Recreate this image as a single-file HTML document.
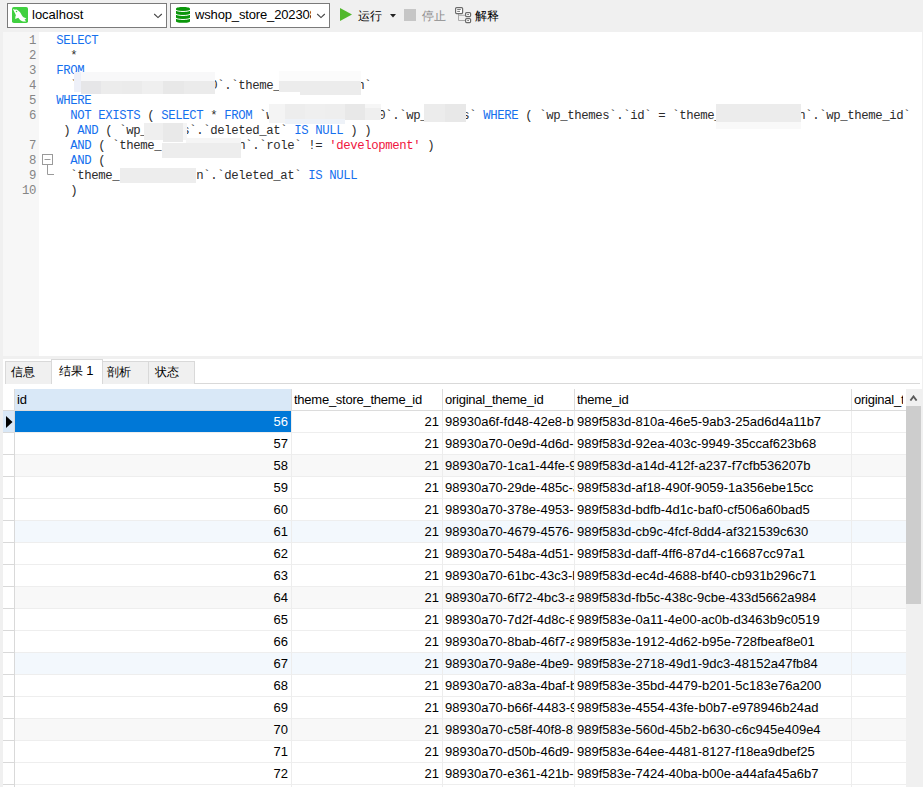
<!DOCTYPE html>
<html><head><meta charset="utf-8">
<style>
*{margin:0;padding:0;box-sizing:border-box}
html,body{width:923px;height:787px;overflow:hidden;background:#f0f0f0;font-family:"Liberation Sans",sans-serif;position:relative}
.a{position:absolute}
.combo{position:absolute;top:3px;height:25px;background:#fff;border:1px solid #7a7a7a}
.ttext{position:absolute;font-size:13px;color:#000;white-space:nowrap;line-height:16px}
#editor{position:absolute;left:3px;top:32px;width:919px;height:324px;background:#fff;overflow:hidden}
#gutter{position:absolute;left:0;top:0;width:36px;height:324px;background:#f7f7f7}
.ln{position:absolute;left:0;width:33px;text-align:right;font-family:"Liberation Mono",monospace;font-size:12.3px;letter-spacing:-0.38px;line-height:15px;color:#858585}
.cl{position:absolute;white-space:pre;font-family:"Liberation Mono",monospace;font-size:12.3px;letter-spacing:-0.38px;line-height:15px;color:#2b2b2b}
.k{color:#1670ee}
.s{color:#f0143c}
.blur{position:absolute}
#res{position:absolute;left:3px;top:359px;width:919px;height:428px;background:#fff;overflow:hidden}
.tab{position:absolute;background:#f0f0f0;border:1px solid #d9d9d9;border-bottom:none;font-size:13px;white-space:nowrap}
.cj{font-size:12px;font-weight:500}
.cell{position:absolute;font-size:13px;white-space:nowrap;overflow:hidden;line-height:22px;color:#000}
</style></head><body>

<div class="combo" style="left:7px;width:160px"></div>
<div class="combo" style="left:170px;width:160px"></div>
<svg class="a" style="left:12px;top:7px" width="16" height="16" viewBox="0 0 16 16"><rect x="0" y="0" width="16" height="16" rx="1.8" fill="#40d040"/><path d="M0.9 2.1 L3.2 2.7 C3.8 2.5 4.6 2.6 5.4 3 C7.4 4 8.6 5.8 9.8 8.2 C10.5 9.6 12 10.8 14.4 11.3 L12.5 12.8 L14.2 14.3 C12.3 14.9 10 14.5 8.4 13.2 C7.5 12.5 6.9 11.6 6.3 10.8 L3.2 12 L3.4 9.6 C3.9 9.1 4 8.5 3.7 7.8 C3.1 6.3 2.1 4.5 0.9 2.1 Z" fill="#fff"/><circle cx="4.5" cy="4.6" r="0.75" fill="#40d040"/></svg>
<div class="ttext" style="left:32px;top:7px">localhost</div>
<svg class="a" style="left:153px;top:13px" width="10" height="7" viewBox="0 0 10 7"><path d="M1.2 1 L5 4.6 L8.8 1" fill="none" stroke="#444" stroke-width="1.1"/></svg>
<svg class="a" style="left:316px;top:13px" width="10" height="7" viewBox="0 0 10 7"><path d="M1.2 1 L5 4.6 L8.8 1" fill="none" stroke="#444" stroke-width="1.1"/></svg>
<svg class="a" style="left:176px;top:7px" width="14" height="16" viewBox="0 0 14 16">
<path d="M0 1.6 C0 -0.5 14 -0.5 14 1.6 V14.2 C14 16.4 0 16.4 0 14.2 Z" fill="#0a960a"/>
<path d="M0 3.2 C2.2 4.9 11.8 4.9 14 3.2" fill="none" stroke="#fff" stroke-width="1"/>
<path d="M0 7.2 C2.2 8.9 11.8 8.9 14 7.2" fill="none" stroke="#fff" stroke-width="1"/>
<path d="M0 11.2 C2.2 12.9 11.8 12.9 14 11.2" fill="none" stroke="#fff" stroke-width="1"/>
</svg>
<div class="ttext" style="left:195px;top:7px;width:116px;overflow:hidden;letter-spacing:-0.15px">wshop_store_20230810</div>
<svg class="a" style="left:340px;top:8px" width="12" height="13" viewBox="0 0 12 13"><path d="M0 0 L12 6.5 L0 13 Z" fill="#52b82c"/></svg>
<div class="ttext cj" style="left:358px;top:8px">运行</div>
<svg class="a" style="left:390px;top:14px" width="6" height="4" viewBox="0 0 6 4"><path d="M0 0 L6 0 L3 3.5 Z" fill="#222"/></svg>
<div class="a" style="left:404px;top:9px;width:12px;height:12px;background:#c6c6c6"></div>
<div class="ttext cj" style="left:422px;top:8px;color:#8c8c8c">停止</div>
<svg class="a" style="left:454px;top:6px" width="18" height="18" viewBox="0 0 18 18">
<path d="M4.5 8 V14.5 H11 M4.5 9.3 H11" fill="none" stroke="#aaa" stroke-width="1"/>
<rect x="1.6" y="1.6" width="7" height="6" rx="1" fill="#fff" stroke="#6a6a6a" stroke-width="1.2"/>
<path d="M3.2 3.5 H6.8 M3.2 5.4 H6" stroke="#6a6a6a" stroke-width="0.9"/>
<rect x="11.6" y="6.6" width="5" height="4" rx="1" fill="#fff" stroke="#6a6a6a" stroke-width="1.2"/>
<rect x="11.6" y="12.6" width="5" height="4" rx="1" fill="#fff" stroke="#6a6a6a" stroke-width="1.2"/>
<path d="M13.2 8.6 H15 M13.2 14.6 H15" stroke="#6a6a6a" stroke-width="0.9"/>
</svg>
<div class="ttext cj" style="left:475px;top:8px">解释</div>
<div id="editor"><div id="gutter"></div>
<div class="ln" style="top:2px">1</div>
<div class="ln" style="top:17px">2</div>
<div class="ln" style="top:32px">3</div>
<div class="ln" style="top:47px">4</div>
<div class="ln" style="top:62px">5</div>
<div class="ln" style="top:77px">6</div>
<div class="ln" style="top:107px">7</div>
<div class="ln" style="top:122px">8</div>
<div class="ln" style="top:137px">9</div>
<div class="ln" style="top:152px">10</div>
<div class="cl" style="left:53.3px;top:2px"><span class="k">SELECT</span></div>
<div class="cl" style="left:53.3px;top:17px">  *</div>
<div class="cl" style="left:53.3px;top:32px"><span class="k">FROM</span></div>
<div class="cl" style="left:53.3px;top:47px">  `                   0`.`theme_           n`</div>
<div class="cl" style="left:53.3px;top:62px"><span class="k">WHERE</span></div>
<div class="cl" style="left:53.3px;top:77px">  <span class="k">NOT</span> <span class="k">EXISTS</span> ( <span class="k">SELECT</span> * <span class="k">FROM</span> `w               0`.`wp_     s` <span class="k">WHERE</span> ( `wp_themes`.`id` = `theme_           n`.`wp_theme_id`</div>
<div class="cl" style="left:53.3px;top:92px"> ) <span class="k">AND</span> ( `wp_     s`.`deleted_at` <span class="k">IS</span> <span class="k">NULL</span> ) )</div>
<div class="cl" style="left:53.3px;top:107px">  <span class="k">AND</span> ( `theme_           n`.`role` != <span class="s">'development'</span> )</div>
<div class="cl" style="left:53.3px;top:122px">  <span class="k">AND</span> (</div>
<div class="cl" style="left:53.3px;top:137px">  `theme_           n`.`deleted_at` <span class="k">IS</span> <span class="k">NULL</span></div>
<div class="cl" style="left:53.3px;top:152px">  )</div>
<svg class="a" style="left:39px;top:122px" width="14" height="22" viewBox="0 0 14 22"><rect x="0.5" y="0.5" width="10" height="10" fill="#fff" stroke="#9a9a9a"/><path d="M2.5 5.5 H8.5" stroke="#9a9a9a"/><path d="M5.5 10.5 V20.5 H12" fill="none" stroke="#9a9a9a"/></svg>
</div>
<div class="blur" style="left:74px;top:72px;width:8px;height:20px;background:#eef0f8"></div>
<div class="blur" style="left:81px;top:72px;width:134px;height:9px;background:#f8f8f9"></div>
<div class="blur" style="left:81px;top:81px;width:20px;height:13px;background:#e6e6e8"></div>
<div class="blur" style="left:101px;top:81px;width:21px;height:13px;background:#ececec"></div>
<div class="blur" style="left:122px;top:81px;width:20px;height:13px;background:#ebebeb"></div>
<div class="blur" style="left:142px;top:81px;width:21px;height:13px;background:#efefef"></div>
<div class="blur" style="left:163px;top:81px;width:21px;height:13px;background:#e8e8e8"></div>
<div class="blur" style="left:184px;top:81px;width:31px;height:13px;background:#ebebeb"></div>
<div class="blur" style="left:279px;top:71px;width:82px;height:10px;background:#fbfbfb"></div>
<div class="blur" style="left:279px;top:81px;width:21px;height:11px;background:#ececec"></div>
<div class="blur" style="left:300px;top:81px;width:61px;height:14px;background:#ececec"></div>
<div class="blur" style="left:269px;top:104px;width:16px;height:19px;background:#f4f4f4"></div>
<div class="blur" style="left:285px;top:104px;width:20px;height:15px;background:#ededed"></div>
<div class="blur" style="left:305px;top:104px;width:20px;height:15px;background:#efefef"></div>
<div class="blur" style="left:325px;top:104px;width:20px;height:15px;background:#eeeeee"></div>
<div class="blur" style="left:345px;top:104px;width:20px;height:16px;background:#e8e8e8"></div>
<div class="blur" style="left:365px;top:104px;width:16px;height:4px;background:#f6f6f6"></div>
<div class="blur" style="left:365px;top:108px;width:16px;height:12px;background:#efefef"></div>
<div class="blur" style="left:285px;top:119px;width:60px;height:5px;background:#eef2f8"></div>
<div class="blur" style="left:424px;top:104px;width:21px;height:18px;background:#ececec"></div>
<div class="blur" style="left:445px;top:104px;width:21px;height:18px;background:#e8e8e8"></div>
<div class="blur" style="left:716px;top:104px;width:85px;height:18px;background:#ececec"></div>
<div class="blur" style="left:716px;top:122px;width:85px;height:7px;background:#f9f9f9"></div>
<div class="blur" style="left:144px;top:123px;width:19px;height:17px;background:#efefef"></div>
<div class="blur" style="left:163px;top:123px;width:20px;height:19px;background:#e9e9e9"></div>
<div class="blur" style="left:183px;top:123px;width:4px;height:17px;background:#f5f5f5"></div>
<div class="blur" style="left:186px;top:138px;width:55px;height:5px;background:#f5f5f5"></div>
<div class="blur" style="left:162px;top:143px;width:79px;height:15px;background:#ededed"></div>
<div class="blur" style="left:120px;top:168px;width:76px;height:15px;background:#ededed"></div>
<div id="res">
<div class="a" style="left:2px;top:24px;width:915px;height:1px;background:#d9d9d9"></div>
<div class="tab" style="left:2px;top:2px;width:47px;height:23px;background:#f0f0f0"></div>
<div class="tab" style="left:48px;top:0px;width:52px;height:25px;background:#fff"></div>
<div class="tab" style="left:99px;top:2px;width:47px;height:23px;background:#f0f0f0"></div>
<div class="tab" style="left:145px;top:2px;width:47px;height:23px;background:#f0f0f0"></div>
<div class="ttext" style="left:8.4px;top:5px"><span class="cj">信息</span></div>
<div class="ttext" style="left:55.6px;top:4px"><span class="cj">结果</span> 1</div>
<div class="ttext" style="left:103.5px;top:5px"><span class="cj">剖析</span></div>
<div class="ttext" style="left:151.5px;top:5px"><span class="cj">状态</span></div>
</div>
<div class="a" style="left:3px;top:389px;width:903px;height:21px;background:#fff"></div>
<div class="a" style="left:15px;top:389px;width:276px;height:21px;background:#d9e8f7"></div>
<div class="a" style="left:3px;top:411px;width:11px;height:21px;background:#d9e8f7"></div>
<div class="a" style="left:15px;top:411px;width:276px;height:21px;background:#0078d7"></div>
<svg class="a" style="left:6px;top:416px" width="7" height="12" viewBox="0 0 7 12"><path d="M0 0 L6.5 6 L0 12 Z" fill="#000"/></svg>
<div class="a" style="left:15px;top:455px;width:891px;height:21px;background:#f8f8f8"></div>
<div class="a" style="left:15px;top:521px;width:891px;height:21px;background:#f3f8fd"></div>
<div class="a" style="left:15px;top:587px;width:891px;height:21px;background:#f8f8f8"></div>
<div class="a" style="left:15px;top:653px;width:891px;height:21px;background:#f3f8fd"></div>
<div class="a" style="left:15px;top:719px;width:891px;height:21px;background:#f8f8f8"></div>
<div class="a" style="left:3px;top:410px;width:903px;height:1px;background:#dcdcdc"></div>
<div class="a" style="left:3px;top:410px;width:11px;height:1px;background:#d9d9d9"></div>
<div class="a" style="left:3px;top:432px;width:903px;height:1px;background:#eeeeee"></div>
<div class="a" style="left:3px;top:432px;width:11px;height:1px;background:#d9d9d9"></div>
<div class="a" style="left:3px;top:454px;width:903px;height:1px;background:#eeeeee"></div>
<div class="a" style="left:3px;top:454px;width:11px;height:1px;background:#d9d9d9"></div>
<div class="a" style="left:3px;top:476px;width:903px;height:1px;background:#eeeeee"></div>
<div class="a" style="left:3px;top:476px;width:11px;height:1px;background:#d9d9d9"></div>
<div class="a" style="left:3px;top:498px;width:903px;height:1px;background:#eeeeee"></div>
<div class="a" style="left:3px;top:498px;width:11px;height:1px;background:#d9d9d9"></div>
<div class="a" style="left:3px;top:520px;width:903px;height:1px;background:#eeeeee"></div>
<div class="a" style="left:3px;top:520px;width:11px;height:1px;background:#d9d9d9"></div>
<div class="a" style="left:3px;top:542px;width:903px;height:1px;background:#eeeeee"></div>
<div class="a" style="left:3px;top:542px;width:11px;height:1px;background:#d9d9d9"></div>
<div class="a" style="left:3px;top:564px;width:903px;height:1px;background:#eeeeee"></div>
<div class="a" style="left:3px;top:564px;width:11px;height:1px;background:#d9d9d9"></div>
<div class="a" style="left:3px;top:586px;width:903px;height:1px;background:#eeeeee"></div>
<div class="a" style="left:3px;top:586px;width:11px;height:1px;background:#d9d9d9"></div>
<div class="a" style="left:3px;top:608px;width:903px;height:1px;background:#eeeeee"></div>
<div class="a" style="left:3px;top:608px;width:11px;height:1px;background:#d9d9d9"></div>
<div class="a" style="left:3px;top:630px;width:903px;height:1px;background:#eeeeee"></div>
<div class="a" style="left:3px;top:630px;width:11px;height:1px;background:#d9d9d9"></div>
<div class="a" style="left:3px;top:652px;width:903px;height:1px;background:#eeeeee"></div>
<div class="a" style="left:3px;top:652px;width:11px;height:1px;background:#d9d9d9"></div>
<div class="a" style="left:3px;top:674px;width:903px;height:1px;background:#eeeeee"></div>
<div class="a" style="left:3px;top:674px;width:11px;height:1px;background:#d9d9d9"></div>
<div class="a" style="left:3px;top:696px;width:903px;height:1px;background:#eeeeee"></div>
<div class="a" style="left:3px;top:696px;width:11px;height:1px;background:#d9d9d9"></div>
<div class="a" style="left:3px;top:718px;width:903px;height:1px;background:#eeeeee"></div>
<div class="a" style="left:3px;top:718px;width:11px;height:1px;background:#d9d9d9"></div>
<div class="a" style="left:3px;top:740px;width:903px;height:1px;background:#eeeeee"></div>
<div class="a" style="left:3px;top:740px;width:11px;height:1px;background:#d9d9d9"></div>
<div class="a" style="left:3px;top:762px;width:903px;height:1px;background:#eeeeee"></div>
<div class="a" style="left:3px;top:762px;width:11px;height:1px;background:#d9d9d9"></div>
<div class="a" style="left:3px;top:784px;width:903px;height:1px;background:#eeeeee"></div>
<div class="a" style="left:3px;top:784px;width:11px;height:1px;background:#d9d9d9"></div>
<div class="a" style="left:14px;top:389px;width:1px;height:21px;background:#dcdcdc"></div>
<div class="a" style="left:14px;top:411px;width:1px;height:376px;background:#d9d9d9"></div>
<div class="a" style="left:291px;top:389px;width:1px;height:21px;background:#dcdcdc"></div>
<div class="a" style="left:291px;top:411px;width:1px;height:376px;background:#ededed"></div>
<div class="a" style="left:442px;top:389px;width:1px;height:21px;background:#dcdcdc"></div>
<div class="a" style="left:442px;top:411px;width:1px;height:376px;background:#ededed"></div>
<div class="a" style="left:574px;top:389px;width:1px;height:21px;background:#dcdcdc"></div>
<div class="a" style="left:574px;top:411px;width:1px;height:376px;background:#ededed"></div>
<div class="a" style="left:851px;top:389px;width:1px;height:21px;background:#dcdcdc"></div>
<div class="a" style="left:851px;top:411px;width:1px;height:376px;background:#ededed"></div>
<div class="cell" style="left:17px;top:389px;width:274px;height:21px;line-height:21px;letter-spacing:-0.25px">id</div>
<div class="cell" style="left:294px;top:389px;width:148px;height:21px;line-height:21px;letter-spacing:-0.25px">theme_store_theme_id</div>
<div class="cell" style="left:445px;top:389px;width:129px;height:21px;line-height:21px;letter-spacing:-0.25px">original_theme_id</div>
<div class="cell" style="left:577px;top:389px;width:274px;height:21px;line-height:21px;letter-spacing:-0.25px">theme_id</div>
<div class="cell" style="left:854px;top:389px;width:49px;height:21px;line-height:21px;letter-spacing:-0.25px">original_theme_id</div>
<div class="cell" style="left:15px;top:411px;width:273px;height:21px;text-align:right;color:#fff">56</div>
<div class="cell" style="left:292px;top:411px;width:147px;height:21px;text-align:right">21</div>
<div class="cell" style="left:445px;top:411px;width:129px;height:21px">98930a6f-fd48-42e8-b123</div>
<div class="cell" style="left:577px;top:411px;width:274px;height:21px">989f583d-810a-46e5-9ab3-25ad6d4a11b7</div>
<div class="cell" style="left:15px;top:433px;width:273px;height:21px;text-align:right;color:#000">57</div>
<div class="cell" style="left:292px;top:433px;width:147px;height:21px;text-align:right">21</div>
<div class="cell" style="left:445px;top:433px;width:129px;height:21px">98930a70-0e9d-4d6d-8123</div>
<div class="cell" style="left:577px;top:433px;width:274px;height:21px">989f583d-92ea-403c-9949-35ccaf623b68</div>
<div class="cell" style="left:15px;top:455px;width:273px;height:21px;text-align:right;color:#000">58</div>
<div class="cell" style="left:292px;top:455px;width:147px;height:21px;text-align:right">21</div>
<div class="cell" style="left:445px;top:455px;width:129px;height:21px">98930a70-1ca1-44fe-9123</div>
<div class="cell" style="left:577px;top:455px;width:274px;height:21px">989f583d-a14d-412f-a237-f7cfb536207b</div>
<div class="cell" style="left:15px;top:477px;width:273px;height:21px;text-align:right;color:#000">59</div>
<div class="cell" style="left:292px;top:477px;width:147px;height:21px;text-align:right">21</div>
<div class="cell" style="left:445px;top:477px;width:129px;height:21px">98930a70-29de-485c-a123</div>
<div class="cell" style="left:577px;top:477px;width:274px;height:21px">989f583d-af18-490f-9059-1a356ebe15cc</div>
<div class="cell" style="left:15px;top:499px;width:273px;height:21px;text-align:right;color:#000">60</div>
<div class="cell" style="left:292px;top:499px;width:147px;height:21px;text-align:right">21</div>
<div class="cell" style="left:445px;top:499px;width:129px;height:21px">98930a70-378e-4953-8123</div>
<div class="cell" style="left:577px;top:499px;width:274px;height:21px">989f583d-bdfb-4d1c-baf0-cf506a60bad5</div>
<div class="cell" style="left:15px;top:521px;width:273px;height:21px;text-align:right;color:#000">61</div>
<div class="cell" style="left:292px;top:521px;width:147px;height:21px;text-align:right">21</div>
<div class="cell" style="left:445px;top:521px;width:129px;height:21px">98930a70-4679-4576-8123</div>
<div class="cell" style="left:577px;top:521px;width:274px;height:21px">989f583d-cb9c-4fcf-8dd4-af321539c630</div>
<div class="cell" style="left:15px;top:543px;width:273px;height:21px;text-align:right;color:#000">62</div>
<div class="cell" style="left:292px;top:543px;width:147px;height:21px;text-align:right">21</div>
<div class="cell" style="left:445px;top:543px;width:129px;height:21px">98930a70-548a-4d51-9123</div>
<div class="cell" style="left:577px;top:543px;width:274px;height:21px">989f583d-daff-4ff6-87d4-c16687cc97a1</div>
<div class="cell" style="left:15px;top:565px;width:273px;height:21px;text-align:right;color:#000">63</div>
<div class="cell" style="left:292px;top:565px;width:147px;height:21px;text-align:right">21</div>
<div class="cell" style="left:445px;top:565px;width:129px;height:21px">98930a70-61bc-43c3-b123</div>
<div class="cell" style="left:577px;top:565px;width:274px;height:21px">989f583d-ec4d-4688-bf40-cb931b296c71</div>
<div class="cell" style="left:15px;top:587px;width:273px;height:21px;text-align:right;color:#000">64</div>
<div class="cell" style="left:292px;top:587px;width:147px;height:21px;text-align:right">21</div>
<div class="cell" style="left:445px;top:587px;width:129px;height:21px">98930a70-6f72-4bc3-a123</div>
<div class="cell" style="left:577px;top:587px;width:274px;height:21px">989f583d-fb5c-438c-9cbe-433d5662a984</div>
<div class="cell" style="left:15px;top:609px;width:273px;height:21px;text-align:right;color:#000">65</div>
<div class="cell" style="left:292px;top:609px;width:147px;height:21px;text-align:right">21</div>
<div class="cell" style="left:445px;top:609px;width:129px;height:21px">98930a70-7d2f-4d8c-8123</div>
<div class="cell" style="left:577px;top:609px;width:274px;height:21px">989f583e-0a11-4e00-ac0b-d3463b9c0519</div>
<div class="cell" style="left:15px;top:631px;width:273px;height:21px;text-align:right;color:#000">66</div>
<div class="cell" style="left:292px;top:631px;width:147px;height:21px;text-align:right">21</div>
<div class="cell" style="left:445px;top:631px;width:129px;height:21px">98930a70-8bab-46f7-a123</div>
<div class="cell" style="left:577px;top:631px;width:274px;height:21px">989f583e-1912-4d62-b95e-728fbeaf8e01</div>
<div class="cell" style="left:15px;top:653px;width:273px;height:21px;text-align:right;color:#000">67</div>
<div class="cell" style="left:292px;top:653px;width:147px;height:21px;text-align:right">21</div>
<div class="cell" style="left:445px;top:653px;width:129px;height:21px">98930a70-9a8e-4be9-8123</div>
<div class="cell" style="left:577px;top:653px;width:274px;height:21px">989f583e-2718-49d1-9dc3-48152a47fb84</div>
<div class="cell" style="left:15px;top:675px;width:273px;height:21px;text-align:right;color:#000">68</div>
<div class="cell" style="left:292px;top:675px;width:147px;height:21px;text-align:right">21</div>
<div class="cell" style="left:445px;top:675px;width:129px;height:21px">98930a70-a83a-4baf-b123</div>
<div class="cell" style="left:577px;top:675px;width:274px;height:21px">989f583e-35bd-4479-b201-5c183e76a200</div>
<div class="cell" style="left:15px;top:697px;width:273px;height:21px;text-align:right;color:#000">69</div>
<div class="cell" style="left:292px;top:697px;width:147px;height:21px;text-align:right">21</div>
<div class="cell" style="left:445px;top:697px;width:129px;height:21px">98930a70-b66f-4483-9123</div>
<div class="cell" style="left:577px;top:697px;width:274px;height:21px">989f583e-4554-43fe-b0b7-e978946b24ad</div>
<div class="cell" style="left:15px;top:719px;width:273px;height:21px;text-align:right;color:#000">70</div>
<div class="cell" style="left:292px;top:719px;width:147px;height:21px;text-align:right">21</div>
<div class="cell" style="left:445px;top:719px;width:129px;height:21px">98930a70-c58f-40f8-8123</div>
<div class="cell" style="left:577px;top:719px;width:274px;height:21px">989f583e-560d-45b2-b630-c6c945e409e4</div>
<div class="cell" style="left:15px;top:741px;width:273px;height:21px;text-align:right;color:#000">71</div>
<div class="cell" style="left:292px;top:741px;width:147px;height:21px;text-align:right">21</div>
<div class="cell" style="left:445px;top:741px;width:129px;height:21px">98930a70-d50b-46d9-8123</div>
<div class="cell" style="left:577px;top:741px;width:274px;height:21px">989f583e-64ee-4481-8127-f18ea9dbef25</div>
<div class="cell" style="left:15px;top:763px;width:273px;height:21px;text-align:right;color:#000">72</div>
<div class="cell" style="left:292px;top:763px;width:147px;height:21px;text-align:right">21</div>
<div class="cell" style="left:445px;top:763px;width:129px;height:21px">98930a70-e361-421b-8123</div>
<div class="cell" style="left:577px;top:763px;width:274px;height:21px">989f583e-7424-40ba-b00e-a44afa45a6b7</div>
<div class="a" style="left:906px;top:389px;width:16px;height:398px;background:#f0f0f0"></div>
<div class="a" style="left:906px;top:406px;width:15px;height:198px;background:#cdcdcd"></div>
<svg class="a" style="left:909px;top:395px" width="9" height="6" viewBox="0 0 9 6"><path d="M1.4 5.6 L4.5 1.4 L7.6 5.6" fill="none" stroke="#5a5a5a" stroke-width="1.8"/></svg>
</body></html>
